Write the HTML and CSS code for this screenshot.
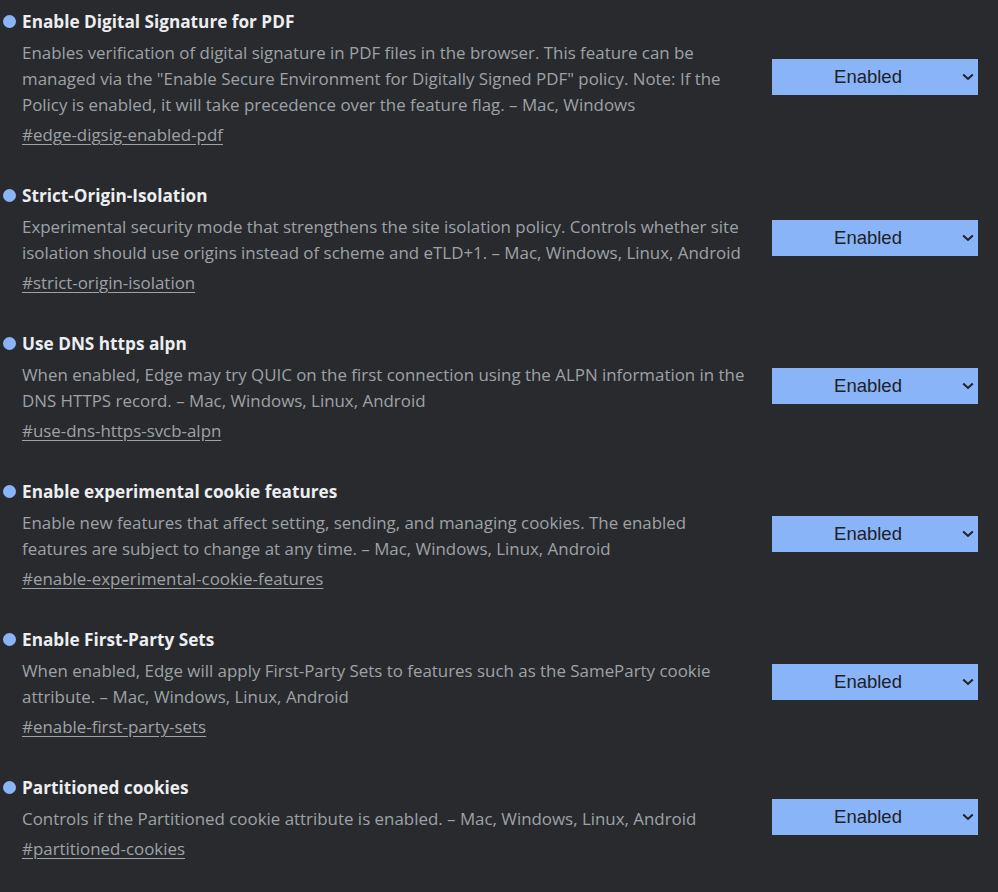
FILE: index.html
```html
<!DOCTYPE html>
<html lang="en">
<head>
<meta charset="utf-8">
<title>Experiments</title>
<link rel="stylesheet" href="styles.css">
</head>
<body>
<div class="flags">
  <div class="flag">
    <div class="info">
      <h3 class="title"><span class="dot"></span>Enable Digital Signature for PDF</h3>
      <p class="desc">Enables verification of digital signature in PDF files in the browser. This feature can be managed via the "Enable Secure Environment for Digitally Signed PDF" policy. Note: If the Policy is enabled, it will take precedence over the feature flag. – Mac, Windows</p>
      <a class="link" href="#edge-digsig-enabled-pdf">#edge-digsig-enabled-pdf</a>
    </div>
    <div class="select"><span class="value">Enabled</span><svg class="chev" width="12" height="8" viewBox="0 0 12 8"><path d="M1.2 1.5 L6 6 L10.8 1.5" fill="none" stroke="#202124" stroke-width="2"/></svg></div>
  </div>
  <div class="flag">
    <div class="info">
      <h3 class="title"><span class="dot"></span>Strict-Origin-Isolation</h3>
      <p class="desc">Experimental security mode that strengthens the site isolation policy. Controls whether site isolation should use origins instead of scheme and eTLD+1. – Mac, Windows, Linux, Android</p>
      <a class="link" href="#strict-origin-isolation">#strict-origin-isolation</a>
    </div>
    <div class="select"><span class="value">Enabled</span><svg class="chev" width="12" height="8" viewBox="0 0 12 8"><path d="M1.2 1.5 L6 6 L10.8 1.5" fill="none" stroke="#202124" stroke-width="2"/></svg></div>
  </div>
  <div class="flag">
    <div class="info">
      <h3 class="title"><span class="dot"></span>Use DNS https alpn</h3>
      <p class="desc">When enabled, Edge may try QUIC on the first connection using the ALPN information in the DNS HTTPS record. – Mac, Windows, Linux, Android</p>
      <a class="link" href="#use-dns-https-svcb-alpn">#use-dns-https-svcb-alpn</a>
    </div>
    <div class="select"><span class="value">Enabled</span><svg class="chev" width="12" height="8" viewBox="0 0 12 8"><path d="M1.2 1.5 L6 6 L10.8 1.5" fill="none" stroke="#202124" stroke-width="2"/></svg></div>
  </div>
  <div class="flag">
    <div class="info">
      <h3 class="title"><span class="dot"></span>Enable experimental cookie features</h3>
      <p class="desc">Enable new features that affect setting, sending, and managing cookies. The enabled features are subject to change at any time. – Mac, Windows, Linux, Android</p>
      <a class="link" href="#enable-experimental-cookie-features">#enable-experimental-cookie-features</a>
    </div>
    <div class="select"><span class="value">Enabled</span><svg class="chev" width="12" height="8" viewBox="0 0 12 8"><path d="M1.2 1.5 L6 6 L10.8 1.5" fill="none" stroke="#202124" stroke-width="2"/></svg></div>
  </div>
  <div class="flag">
    <div class="info">
      <h3 class="title"><span class="dot"></span>Enable First-Party Sets</h3>
      <p class="desc">When enabled, Edge will apply First-Party Sets to features such as the SameParty cookie attribute. – Mac, Windows, Linux, Android</p>
      <a class="link" href="#enable-first-party-sets">#enable-first-party-sets</a>
    </div>
    <div class="select"><span class="value">Enabled</span><svg class="chev" width="12" height="8" viewBox="0 0 12 8"><path d="M1.2 1.5 L6 6 L10.8 1.5" fill="none" stroke="#202124" stroke-width="2"/></svg></div>
  </div>
  <div class="flag">
    <div class="info">
      <h3 class="title"><span class="dot"></span>Partitioned cookies</h3>
      <p class="desc">Controls if the Partitioned cookie attribute is enabled. – Mac, Windows, Linux, Android</p>
      <a class="link" href="#partitioned-cookies">#partitioned-cookies</a>
    </div>
    <div class="select"><span class="value">Enabled</span><svg class="chev" width="12" height="8" viewBox="0 0 12 8"><path d="M1.2 1.5 L6 6 L10.8 1.5" fill="none" stroke="#202124" stroke-width="2"/></svg></div>
  </div>
</div>
</body>
</html>
```
FILE: styles.css
```css
html, body {
  margin: 0;
  padding: 0;
  background: #292a2d;
}
body {
  font-family: "Open Sans", "Noto Sans", sans-serif;
  color: #9aa0a6;
}
.flags {
  display: flex;
  flex-direction: column;
  gap: 36px;
  padding: 10px 20px 0 0;
}
.flag {
  display: flex;
  align-items: center;
  gap: 17px;
}
.info {
  flex: 1;
  min-width: 0;
  padding-left: 22px;
  display: flex;
  flex-direction: column;
  align-items: flex-start;
}
.title {
  position: relative;
  margin: 0 0 6px;
  font-size: 17.2px;
  font-weight: 700;
  line-height: 24px;
  color: #eceef1;
}
.dot {
  position: absolute;
  left: -19px;
  top: 5px;
  width: 13px;
  height: 13px;
  border-radius: 50%;
  background: #8ab4f8;
}
.desc {
  margin: 0;
  font-size: 16.9px;
  line-height: 26px;
  color: #9ea2a7;
}
.link {
  margin-top: 4px;
  font-size: 16.9px;
  line-height: 26px;
  color: #9ea2a7;
  text-decoration: underline;
  text-underline-offset: 3px;
}
.select {
  flex: none;
  width: 206px;
  height: 36px;
  margin-bottom: 4px;
  box-sizing: border-box;
  background: #8ab4f8;
  display: flex;
  align-items: center;
  position: relative;
  font-family: "Liberation Sans", Arial, sans-serif;
  font-size: 18.5px;
  color: #202124;
}
.value {
  flex: 1;
  text-align: center;
  padding-right: 14px;
}
.chev {
  position: absolute;
  right: 4px;
  top: 14px;
}
```
